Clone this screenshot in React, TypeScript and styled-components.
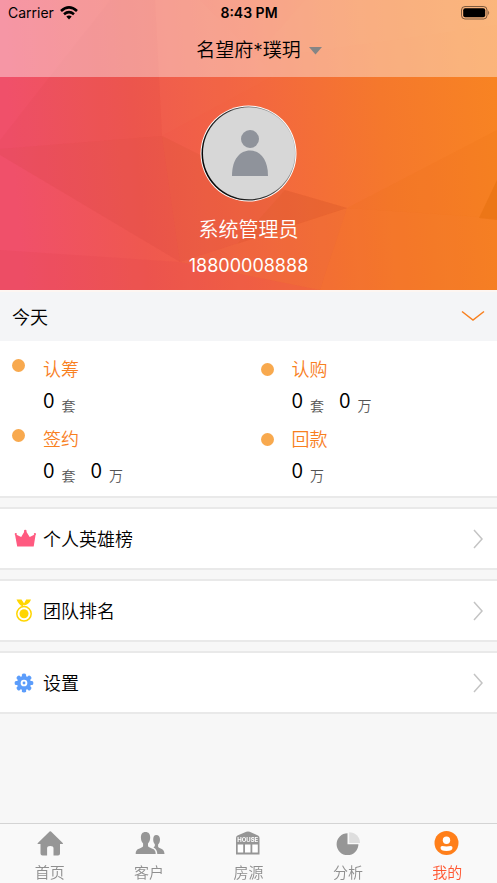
import React from "react";
import styled, { createGlobalStyle } from "styled-components";

const GlobalStyle = createGlobalStyle`
  * { box-sizing: border-box; }
  body {
    margin: 0;
    background: #f7f7f7;
    color: #000;
    font-family: Inter, "Noto Sans CJK SC", sans-serif;
    font-weight: 350;
  }
  button { font: inherit; color: inherit; background: none; border: 0; padding: 0; cursor: pointer; }
`;

const Screen = styled.div`
  display: flex;
  flex-direction: column;
  min-height: 100vh;
`;

const Hero = styled.header`
  position: relative;
  overflow: hidden;
  color: #fff;
`;

const Backdrop = styled.svg`
  position: absolute;
  inset: 0;
  width: 100%;
  height: 100%;
`;

const TopBar = styled.div`
  position: relative;
  padding-bottom: 8px;
  background: rgba(255, 255, 255, 0.4);
  color: #000;
`;

const StatusBar = styled.div`
  display: grid;
  grid-template-columns: 1fr auto 1fr;
  align-items: center;
  height: 25px;
  padding: 0 7px 0 8px;
  font-size: 14px;
  font-weight: 400;
  line-height: 20px;
`;

const Carrier = styled.span`
  display: flex;
  align-items: center;
  gap: 6px;
`;

const Clock = styled.time`
  font-weight: 600;
`;

const BatterySlot = styled.span`
  display: flex;
  justify-content: flex-end;
`;

const ProjectPicker = styled.button`
  display: flex;
  align-items: center;
  gap: 8px;
  height: 44px;
  margin: 0 auto;
  padding: 8px 0 0 21px;
  font-size: 19px;
  line-height: 28px;
`;

const Profile = styled.section`
  position: relative;
  display: flex;
  flex-direction: column;
  align-items: center;
  padding: 28px 0 10px;
`;

const Name = styled.h1`
  margin: 13px 0 7px;
  font-size: 20px;
  font-weight: 350;
  line-height: 30px;
`;

const Phone = styled.p`
  margin: 0;
  font-size: 18px;
  font-weight: 400;
  line-height: 28px;
`;

const Main = styled.main`
  display: flex;
  flex: 1;
  flex-direction: column;
  gap: 9px;
`;

const Summary = styled.section`
  background: #fff;
  border-top: 2px solid #fdf6f2;
  border-bottom: 2px solid #e9e9e9;
`;

const PeriodButton = styled.button`
  display: flex;
  align-items: center;
  justify-content: space-between;
  width: 100%;
  height: 49px;
  padding: 0 12px 2px;
  background: #f4f5f7;
  font-size: 18px;
`;

const Stats = styled.div`
  display: grid;
  grid-template-columns: 1fr 1fr;
  padding: 13px 0 2px;
`;

const Stat = styled.div`
  display: grid;
  grid-template-columns: 31px 1fr;
  padding-left: 12px;
  height: 70px;
  align-content: start;
`;

const Dot = styled.span<{ $raised: boolean }>`
  width: 13px;
  height: 13px;
  margin-top: ${(p) => (p.$raised ? 5 : 9)}px;
  border-radius: 50%;
  background: #f8a94e;
`;

const StatLabel = styled.h2`
  margin: 0;
  color: #f8801f;
  font-size: 18px;
  font-weight: 350;
  line-height: 32px;
`;

const Values = styled.p`
  display: flex;
  grid-column: 2;
  gap: 15px;
  margin: 0;
  font-family: "Noto Sans CJK SC", sans-serif;
  line-height: 26px;
`;

const Amount = styled.span`
  display: flex;
  gap: 7px;
  font-size: 21px;
`;

const Unit = styled.small`
  padding-top: 6px;
  color: #555;
  font-size: 14px;
`;

const MenuRow = styled.button`
  display: flex;
  align-items: center;
  height: 63px;
  padding: 0 13px 0 12px;
  background: #fff;
  border-top: 2px solid #e9e9e9;
  border-bottom: 2px solid #e9e9e9;
  font-size: 18px;
`;

const MenuIcon = styled.svg`
  flex: none;
  width: 24px;
  height: 26px;
  margin-right: 7px;
`;

const MenuText = styled.span`
  flex: 1;
  padding-bottom: 2px;
  text-align: left;
`;

const TabBar = styled.nav`
  position: sticky;
  bottom: 0;
  display: grid;
  grid-template-columns: repeat(5, 1fr);
  height: 60px;
  background: #f9f9f9;
  border-top: 1px solid #d4d4d4;
`;

const Tab = styled.a<{ $active: boolean }>`
  display: flex;
  flex-direction: column;
  align-items: center;
  gap: 4px;
  padding-top: 5px;
  color: ${(p) => (p.$active ? "#ff5630" : "#8f8f8f")};
  font-size: 15px;
  line-height: 24px;
  text-decoration: none;
`;

const TabIcon = styled.svg`
  flex: none;
  width: 32px;
  height: 28px;
`;

const stats = [
  { label: "认筹", values: [["0", "套"]] },
  { label: "认购", values: [["0", "套"], ["0", "万"]] },
  { label: "签约", values: [["0", "套"], ["0", "万"]] },
  { label: "回款", values: [["0", "万"]] },
];

const gearTeeth = [0, 45, 90, 135, 180, 225, 270, 315];

const menu = [
  {
    label: "个人英雄榜",
    icon: (
      <>
        <path d="M2.900 8 9.200 11 13.300 4 17.700 11 23.700 8 21.700 20.500H5.200Z" fill="#ff5a80" />
        <g fill="#ff5a80">
          <circle cx="3.800" cy="8" r="1.100" />
          <circle cx="13.300" cy="5" r="1.300" />
          <circle cx="22.900" cy="8" r="1.100" />
        </g>
      </>
    ),
  },
  {
    label: "团队排名",
    icon: (
      <>
        <path d="M4.500 1.500h5l3 4.600-2 2.200Q7 7 4.500 1.500ZM14.200 1.500H19q-1.500 4.500-6.500 6l-.8-1.500Z" fill="#ffd500" />
        <circle cx="12" cy="15.800" r="7.200" fill="none" stroke="#ffd500" strokeWidth="1.500" />
        <circle cx="12" cy="15.800" r="4.500" fill="#ffd500" />
      </>
    ),
  },
  {
    label: "设置",
    icon: (
      <>
        <g fill="#5c9dfb">
          {gearTeeth.map((angle) => (
            <path key={angle} d="M9.900 8V4.800q.3-1.200 2.100-1.200t2.100 1.200V8Z" transform={`rotate(${angle} 12 13)`} />
          ))}
        </g>
        <circle cx="12" cy="13" r="7" fill="#5c9dfb" />
        <circle cx="12" cy="13" r="2.400" fill="none" stroke="#fff" strokeWidth="1.900" />
      </>
    ),
  },
];

const tabs = [
  {
    label: "首页",
    icon: (
      <path
        d="M15.600 2.600Q16.300 2 17 2.600L29 14.200Q29.300 15 28.400 15H26v9.500q0 2-2 2h-4.500v-7.300q0-2.200-3.200-2.200t-3.200 2.200v7.300H8.500q-2 0-2-2V15H4q-.8 0-.4-.8Z"
        fill="#969696"
      />
    ),
  },
  {
    label: "客户",
    icon: (
      <g fill="#969696">
        <path d="M12.500 3c3.200 0 4.700 2.200 4.700 5.400 0 2.400-.9 4.600-2.200 6v2.200c0 1.400 1 1.800 3.300 2.600 3 1 4.400 2.200 4.400 5.800H2.700c0-3.600 1.400-4.800 4.400-5.800 2.300-.8 3-1.200 3-2.600v-2.200c-1.400-1.400-2.200-3.600-2.200-6C7.900 5.200 9.300 3 12.500 3Z" />
        <path d="M23.200 6c2.600 0 3.800 1.700 3.800 4.600 0 2.100-.7 3.900-1.900 5v1.700c0 1.100.8 1.600 2.600 2.300 2.300.9 3.500 1.900 3.800 5.400h-7.200c-.1-3.400-1.300-5.200-3.900-6.400 1.200-.7 1.500-1.500 1.500-2.500v-.7c-1.100-1.200-1.700-2.900-1.700-4.800C20.200 7.700 21.100 6 23.200 6Z" />
      </g>
    ),
  },
  {
    label: "房源",
    icon: (
      <>
        <path d="M4 9Q4 7.300 5.500 6.500L14.300 2.800q1.700-.7 3.400 0L26 6.500q1.500.8 1.500 2.500V25.500H4Z" fill="#969696" />
        <text x="15.700" y="12.600" fill="#fff" fontSize="6" fontWeight="700" textAnchor="middle">HOUSE</text>
        <path d="M5.700 15.500h5.500v8H5.700ZM13 15.500h5.500v8H13ZM20.300 15.500h5.500v8h-5.500Z" fill="#fff" />
      </>
    ),
  },
  {
    label: "分析",
    icon: (
      <>
        <path d="M15.500 4.300v10.900h10.900A10.900 10.900 0 1 1 15.500 4.300Z" fill="#969696" />
        <path d="M17.200 3.200A10.800 10.800 0 0 1 28 14H17.200Z" fill="#dedede" />
      </>
    ),
  },
  {
    label: "我的",
    icon: (
      <>
        <circle cx="15.500" cy="14" r="12" fill="#ff7f1a" />
        <circle cx="15.500" cy="11.200" r="3.700" fill="#fff" />
        <path d="M9.500 18.800q0-1.700 1.700-1.700 4.300.6 8.600 0 1.700 0 1.700 1.700 0 3.200-6 3.200t-6-3.200Z" fill="#fff" />
      </>
    ),
  },
];

function HeroBackdrop() {
  return (
    <Backdrop viewBox="0 0 497 290" preserveAspectRatio="none" aria-hidden="true">
      <defs>
        <linearGradient id="heat" x1="0" y1="0.050" x2="1" y2="0">
          <stop offset="0" stopColor="#f0506a" />
          <stop offset="0.250" stopColor="#ef584f" />
          <stop offset="0.500" stopColor="#f36740" />
          <stop offset="0.750" stopColor="#f5782c" />
          <stop offset="1" stopColor="#f88422" />
        </linearGradient>
      </defs>
      <path d="M0 0h497v290H0Z" fill="url(#heat)" />
      <path d="M110 0h45l7 136L0 149v-9Z" fill="#c83838" opacity="0.060" />
      <path d="M0 149 162 136l18 126L0 155Z" fill="#d03c38" opacity="0.160" />
      <path d="M162 136 240 175l45 15 62 18-167 54Z" fill="#d85030" opacity="0.220" />
      <path d="M0 250 180 262 320 290H0Z" fill="#e04048" opacity="0.160" />
      <path d="M180 262 347 208 320 290Z" fill="#e86830" opacity="0.200" />
      <path d="M285 190 347 208l-110 36Z" fill="#d05018" opacity="0.120" />
      <path d="M347 208 497 130v88Z" fill="#e86d12" opacity="0.120" />
      <path d="M347 208 497 218v72H320Z" fill="#ee7424" opacity="0.200" />
      <path d="M497 180v40l-18-2Z" fill="#e36d0c" opacity="0.450" />
      <path d="M200 0 275 75 162 136 155 0Z" fill="#fb8060" opacity="0.050" />
      <path d="M305 0 252 60 497 25V0Z" fill="#ffa050" opacity="0.050" />
    </Backdrop>
  );
}

export default function App() {
  return (
    <Screen>
      <GlobalStyle />
      <Hero>
        <HeroBackdrop />
        <TopBar>
          <StatusBar>
            <Carrier>
              Carrier
              <svg width="18" height="14" viewBox="0 0 18 14" fill="none" stroke="#000" strokeWidth="2.600" role="img" aria-label="Wi-Fi">
                <path d="M1 5Q9-2.200 17 5M4 8.200q5-4.200 10 0" />
                <path d="M6.300 10.500q2.700-2.200 5.400 0L9 13.500Z" fill="#000" stroke="none" />
              </svg>
            </Carrier>
            <Clock>8:43 PM</Clock>
            <BatterySlot>
              <svg width="29" height="14" viewBox="0 0 29 14" role="img" aria-label="Battery full">
                <rect x="0.500" y="0.500" width="25.500" height="12.500" rx="3.500" fill="none" stroke="#000" strokeOpacity="0.500" />
                <rect x="2.200" y="2.200" width="22" height="9" rx="2" />
                <path d="M27.200 4.500q2 2.300 0 4.600Z" fillOpacity="0.500" />
              </svg>
            </BatterySlot>
          </StatusBar>
          <ProjectPicker>
            名望府*璞玥
            <svg width="13" height="8" viewBox="0 0 13 8" aria-hidden="true">
              <path d="M0 0h13L6.500 7.500Z" fill="#858585" />
            </svg>
          </ProjectPicker>
        </TopBar>
        <Profile>
          <svg width="97" height="97" viewBox="0 0 97 97" role="img" aria-label="头像">
            <defs>
              <linearGradient id="ring" x1="0" y1="0.700" x2="1" y2="0.300">
                <stop offset="0" stopColor="#000" />
                <stop offset="0.500" stopColor="#333" />
                <stop offset="1" stopColor="#bbb" />
              </linearGradient>
            </defs>
            <circle cx="48.500" cy="48.500" r="48" fill="#fff" />
            <circle cx="48.500" cy="48.500" r="47" fill="url(#ring)" />
            <circle cx="49" cy="48.200" r="46" fill="#d7d7d7" />
            <circle cx="50" cy="34" r="9" fill="#8f939b" />
            <path d="M32 71C32 54 40 45.500 50 45.500S68 54 68 71Z" fill="#8f939b" />
          </svg>
          <Name>系统管理员</Name>
          <Phone>18800008888</Phone>
        </Profile>
      </Hero>
      <Main>
        <Summary>
          <PeriodButton>
            今天
            <svg width="24" height="12" viewBox="0 0 24 12" fill="none" stroke="#f8801f" strokeWidth="1.500" aria-hidden="true">
              <path d="M1 1.500 12 10 23 1.500" />
            </svg>
          </PeriodButton>
          <Stats>
            {stats.map((stat, i) => (
              <Stat key={stat.label}>
                <Dot $raised={i % 2 === 0} />
                <StatLabel>{stat.label}</StatLabel>
                <Values>
                  {stat.values.map(([n, unit]) => (
                    <Amount key={unit}>
                      {n}
                      <Unit>{unit}</Unit>
                    </Amount>
                  ))}
                </Values>
              </Stat>
            ))}
          </Stats>
        </Summary>
        {menu.map((item) => (
          <MenuRow key={item.label}>
            <MenuIcon viewBox="0 0 24 26" aria-hidden="true">{item.icon}</MenuIcon>
            <MenuText>{item.label}</MenuText>
            <svg width="12" height="20" viewBox="0 0 12 20" fill="none" stroke="#c4c4c4" strokeWidth="1.500" aria-hidden="true">
              <path d="M2 1 10 10 2 19" />
            </svg>
          </MenuRow>
        ))}
      </Main>
      <TabBar>
        {tabs.map((tab, i) => (
          <Tab key={tab.label} href="#" $active={i === 4} aria-current={i === 4 ? "page" : undefined}>
            <TabIcon viewBox="0 0 32 28" aria-hidden="true">{tab.icon}</TabIcon>
            {tab.label}
          </Tab>
        ))}
      </TabBar>
    </Screen>
  );
}
